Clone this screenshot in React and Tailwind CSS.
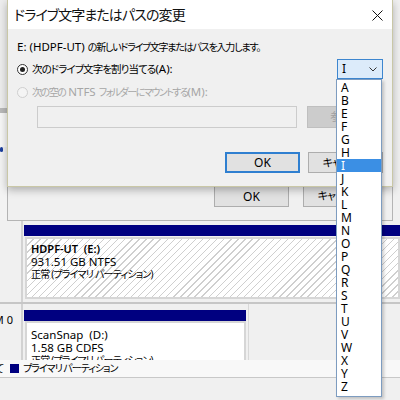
import React from "react";

const FONT = "font-['Noto_Sans','Noto_Sans_CJK_JP',sans-serif] [font-feature-settings:'palt']";
const LETTERS = ["A","B","E","F","G","H","I","J","K","L","M","N","O","P","Q","R","S","T","U","V","W","X","Y","Z"];
const HATCH = "bg-[repeating-linear-gradient(135deg,#ffffff_0px,#ffffff_4px,#cfcfcf_4px,#cfcfcf_5px)]";

function Radio({ checked, disabled }) {
  return (
    <div className={`w-[11px] h-[11px] rounded-full border flex items-center justify-center shrink-0 ${disabled ? "border-[#cfcfcf] bg-[#f4f4f4]" : "border-[#333] bg-white"}`}>
      {checked && <div className="w-[5px] h-[5px] rounded-full bg-[#222]" />}
    </div>
  );
}

export default function App() {
  return (
    <div className={`relative w-[400px] h-[400px] overflow-hidden bg-[#f0f0f0] text-black ${FONT}`}>
      {/* Base: disk management window */}
      <div className="flex flex-col h-full">
        <div className="h-[220px] shrink-0 flex flex-col w-[7px]">
          <div className="h-[108px] bg-[#ededed]" />
          <div className="h-[5px] bg-[#b9b9b9]" />
          <div className="h-[34px] bg-[#f7f7f7]" />
          <div className="h-[5px] w-[3px] rounded-full bg-[#1c3f9e]" />
          <div className="flex-1 bg-[#f3f3f3]" />
        </div>
        {/* disk row 1 */}
        <div className="h-[84px] shrink-0 flex border-b-2 border-[#c6c6c6]">
          <div className="w-[23px] border-r-2 border-[#d2d2d2]" />
          <div className="flex-1 flex flex-col pt-[5px] pl-[1px]">
            <div className="h-[11px] bg-[#000080]" />
            <div className={`h-[62px] ml-[1px] mt-[1px] border-2 border-[#d6d6d6] ${HATCH} px-[4px] pt-[3px] text-[11.5px] leading-[13px]`}>
              <div className="font-semibold text-[11px]">HDPF-UT&nbsp;&nbsp;(E:)</div>
              <div>931.51 GB NTFS</div>
              <div className="text-[10px] tracking-[-0.8px]">正常 (プライマリ パーティション)</div>
            </div>
          </div>
        </div>
        {/* disk row 2 */}
        <div className="h-[56px] shrink-0 flex">
          <div className="w-[23px] border-r-2 border-[#d2d2d2] overflow-hidden flex justify-end pr-[8px] pt-[9px] text-[11px] leading-[13px] whitespace-nowrap">
            <span>CD-ROM 0</span>
          </div>
          <div className="w-[226px] flex flex-col pt-[6px] pl-[1px] border-r border-[#d8d8d8]">
            <div className="h-[11px] w-[222px] bg-[#000080]" />
            <div className="flex-1 w-[221px] ml-[1px] border-2 border-b-0 border-[#d6d6d6] bg-white px-[4px] pt-[5px] text-[11.5px] leading-[13px] overflow-hidden">
              <div>ScanSnap&nbsp;&nbsp;(D:)</div>
              <div>1.58 GB CDFS</div>
              <div className="text-[10px] tracking-[-0.8px]">正常 (プライマリ パーティション)</div>
            </div>
          </div>
          <div className="flex-1" />
        </div>
        {/* legend */}
        <div className="h-[18px] shrink-0 flex items-center bg-[#f8f8f8] border-b border-[#c8c8c8] text-[10px] leading-[13px] overflow-hidden whitespace-nowrap">
          <span className="-ml-[5px] w-[11px]">て</span>
          <div className="w-[9px] h-[9px] bg-[#000080] ml-[4px]" />
          <span className="ml-[4px] tracking-[-1px]">プライマリ パーティション</span>
        </div>
        <div className="flex-1 bg-[#f0f0f0]" />
      </div>

      {/* Second dialog (behind) */}
      <div className="absolute left-[7px] top-0 w-[386px] h-[221px] bg-[#f0f0f0] border-x border-b border-[#b4b4b4] flex flex-col justify-end pb-[13px]">
        <div className="flex pl-[206px] gap-[14px] text-[12px]">
          <div className="w-[75px] h-[21px] bg-[#e1e1e1] border border-[#adadad] flex items-center justify-center">OK</div>
          <div className="w-[75px] h-[21px] bg-[#e1e1e1] border border-[#adadad] flex items-center justify-center text-[11px] tracking-[-0.8px]">キャンセル</div>
        </div>
      </div>

      {/* Front dialog */}
      <div className="absolute left-[7px] top-0 w-[386px] h-[187px] bg-[#f0f0f0] border border-t-0 border-[#c9c7a6] shadow-[0_3px_8px_rgba(0,0,0,0.28)] flex flex-col">
        <div className="h-[29px] bg-white flex items-center pl-[6px] pr-[9px] pt-[1px]">
          <span className="text-[14px] leading-[20px] tracking-[-0.9px] text-[#111]">ドライブ文字またはパスの変更</span>
          <svg className="ml-auto" width="11" height="11" viewBox="0 0 11 11">
            <path d="M0.5 0.5 L10.5 10.5 M10.5 0.5 L0.5 10.5" stroke="#111" strokeWidth="1" fill="none" />
          </svg>
        </div>
        <div className="flex flex-col px-[9px] pt-[11px] text-[11.5px] leading-[14px]">
          <div className="whitespace-nowrap">
            E: (HDPF-UT) <span className="text-[10px] tracking-[-1.2px]">の新しいドライブ文字またはパスを入力します。</span>
          </div>
          <div className="mt-[5px] h-[20px] flex items-center">
            <Radio checked />
            <span className="ml-[4px] whitespace-nowrap">
              <span className="text-[10.5px] tracking-[-0.9px]">次のドライブ文字を割り当てる</span>(A):
            </span>
            <div className="ml-auto w-[46px] h-[20px] border border-[#3d86cf] bg-[#dcebfa] flex items-center pl-[4px] pr-[5px]">
              <span className="text-[12px]">I</span>
              <svg className="ml-auto" width="8" height="5" viewBox="0 0 8 5">
                <path d="M0.5 0.5 L4 4 L7.5 0.5" stroke="#333" strokeWidth="1" fill="none" />
              </svg>
            </div>
          </div>
          <div className="mt-[6px] h-[14px] flex items-center text-[#a6a6a6]">
            <Radio disabled />
            <span className="ml-[4px] whitespace-nowrap">
              <span className="text-[10px] tracking-[-1.5px]">次の空の</span> NTFS <span className="text-[10px] tracking-[-1.5px]">フォルダーにマウントする</span>(M):
            </span>
          </div>
          <div className="mt-[7px] flex ml-[20px] gap-[10px]">
            <div className="w-[260px] h-[22px] border border-[#cccccc] bg-[#f0f0f0]" />
            <div className="w-[75px] h-[22px] bg-[#cccccc] border border-[#bfbfbf] flex items-center justify-center text-[#a0a0a0] text-[11px] tracking-[-0.5px]">参照...</div>
          </div>
          <div className="mt-[24px] flex justify-end gap-[8px] text-[12px]">
            <div className="w-[75px] h-[21px] bg-[#e1e1e1] border-2 border-[#2f7fd0] flex items-center justify-center">OK</div>
            <div className="w-[75px] h-[21px] bg-[#e1e1e1] border border-[#adadad] flex items-center justify-center text-[11px] tracking-[-0.8px]">キャンセル</div>
          </div>
        </div>
      </div>

      {/* Dropdown list */}
      <div className="absolute left-[336px] top-[79px] w-[46px] h-[318px] bg-white border border-[#7d9cc0] shadow-[2px_2px_3px_rgba(0,0,0,0.2)] pt-[1px] flex flex-col">
        {LETTERS.map((l) => (
          <div
            key={l}
            className={`h-[13px] leading-[13px] text-[12px] pl-[4px] ${l === "I" ? "bg-[#3b8fe4] text-white" : ""}`}
          >
            {l}
          </div>
        ))}
      </div>
    </div>
  );
}
